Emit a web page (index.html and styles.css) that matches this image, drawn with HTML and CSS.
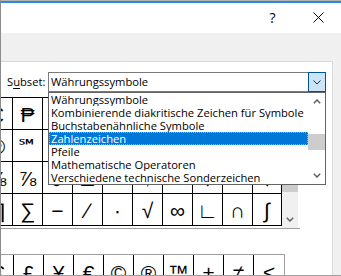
FILE: index.html
```html
<!DOCTYPE html>
<html lang="de">
<head>
<meta charset="utf-8">
<title>Symbol</title>
<link rel="stylesheet" href="styles.css">
</head>
<body>
<div class="window">
  <div class="accent"></div>
  <div class="titlebar">
    <div class="tb-btn help">?</div>
    <div class="tb-btn close"><svg width="11" height="11" viewBox="0 0 11 11"><path d="M0.5 0.5 L10.5 10.5 M10.5 0.5 L0.5 10.5" stroke="#000" stroke-width="1" fill="none"/></svg></div>
  </div>
  <div class="band"></div>
  <div class="panel">
    <div class="subset-row">
      <label class="subset-label">S<u>u</u>bset:</label>
      <div class="combo">
        <span class="combo-text">Währungssymbole</span>
        <span class="combo-btn"><svg width="8" height="5" viewBox="0 0 8 5"><path d="M0.5 0.5 L4 4 L7.5 0.5" stroke="#2b2b2b" stroke-width="1" fill="none"/></svg></span>
        <div class="dropdown">
          <ul class="list">
            <li>Währungssymbole</li>
            <li>Kombinierende diakritische Zeichen für Symbole</li>
            <li>Buchstabenähnliche Symbole</li>
            <li class="sel">Zahlenzeichen</li>
            <li>Pfeile</li>
            <li>Mathematische Operatoren</li>
            <li>Verschiedene technische Sonderzeichen</li>
          </ul>
          <div class="lscroll">
            <span class="l-arrow"><svg width="8" height="5" viewBox="0 0 8 5"><path d="M0.8 4.2 L4 1 L7.2 4.2" stroke="#606060" stroke-width="1.5" fill="none"/></svg></span>
            <span class="l-track"><span class="l-thumb"></span></span>
            <span class="l-arrow"><svg width="8" height="5" viewBox="0 0 8 5"><path d="M0.8 0.8 L4 4 L7.2 0.8" stroke="#606060" stroke-width="1.5" fill="none"/></svg></span>
          </div>
        </div>
      </div>
    </div>
    <div class="grid-wrap">
      <div class="grid">
        <span class="cell">€</span><span class="cell">₱</span><span class="cell">₲</span><span class="cell">₴</span><span class="cell">₵</span><span class="cell">₸</span><span class="cell">₹</span><span class="cell">₺</span><span class="cell">₼</span><span class="cell">₽</span>
        <span class="cell">℗</span><span class="cell">℠</span><span class="cell">™</span><span class="cell">Ω</span><span class="cell">℮</span><span class="cell">⅓</span><span class="cell">⅔</span><span class="cell">⅛</span><span class="cell">⅜</span><span class="cell">⅝</span>
        <span class="cell">⅝</span><span class="cell">⅞</span><span class="cell">∂</span><span class="cell">∆</span><span class="cell">←</span><span class="cell">↑</span><span class="cell">→</span><span class="cell">↓</span><span class="cell">↔</span><span class="cell">↕</span>
        <span class="cell">∏</span><span class="cell">∑</span><span class="cell">−</span><span class="cell">∕</span><span class="cell">∙</span><span class="cell">√</span><span class="cell">∞</span><span class="cell">∟</span><span class="cell">∩</span><span class="cell">∫</span>
      </div>
      <div class="gscroll">
        <div class="g-arrow"></div>
        <div class="g-track g-pre"></div>
        <div class="g-thumb"></div>
        <div class="g-track g-post"></div>
        <div class="g-arrow"><svg width="8" height="5" viewBox="0 0 8 5"><path d="M0.8 0.8 L4 4 L7.2 0.8" stroke="#606060" stroke-width="1.5" fill="none"/></svg></div>
      </div>
    </div>
    <div class="grid-base"></div>
    <div class="recent">
      <span class="rcell">€</span><span class="rcell">£</span><span class="rcell">¥</span><span class="rcell">€</span><span class="rcell">©</span><span class="rcell">®</span><span class="rcell">™</span><span class="rcell">±</span><span class="rcell">≠</span><span class="rcell last">≤</span>
    </div>
  </div>
</div>
</body>
</html>
```

FILE: styles.css
```css
* { box-sizing: border-box; }
html, body { margin: 0; padding: 0; }
body {
  width: 341px;
  height: 276px;
  overflow: hidden;
  background: #f0f0f0;
  font-family: "Open Sans", "Noto Sans", sans-serif;
  font-size: 11.2px;
  color: #000;
}
.window {
  width: 341px;
  height: 276px;
  border-left: 1px solid #8c8c8c;
  border-top: 1px solid #b4b4b4;
  border-bottom: 1px solid #a0a0a0;
  display: flex;
  flex-direction: column;
  background: #f0f0f0;
  overflow: hidden;
}
.accent { height: 2px; background: #2b8ad9; flex: none; }
.titlebar {
  height: 30px;
  flex: none;
  background: #fff;
  display: flex;
  justify-content: flex-end;
  align-items: stretch;
}
.tb-btn {
  display: flex;
  align-items: center;
  justify-content: center;
}
.help { width: 45px; font-size: 14px; line-height: 1; padding-bottom: 1px; }
.close { width: 46px; padding-bottom: 1px; }
.band { height: 28px; flex: none; }
.panel {
  flex: 1;
  width: 332px;
  background: #fff;
  border-top: 1px solid #d9d9d9;
  border-right: 1px solid #d9d9d9;
  overflow: hidden;
}
.subset-row {
  display: flex;
  align-items: center;
  padding: 10px 0 0 6px;
  position: relative;
  z-index: 5;
}
.subset-label { width: 41px; line-height: 18px; }
.subset-label u { text-decoration-thickness: 1px; text-underline-offset: 2px; }
.combo {
  position: relative;
  width: 278px;
  height: 20px;
  border: 1px solid #7a7a7a;
  background: #fff;
  display: flex;
}
.combo-text { flex: 1; padding-left: 2px; line-height: 18px; white-space: nowrap; }
.combo-btn {
  width: 18px;
  height: 20px;
  margin: -1px -1px -1px 0;
  background: #cce4f7;
  border: 1px solid #005499;
  display: flex;
  align-items: center;
  justify-content: center;
}
.dropdown {
  position: absolute;
  left: -1px;
  top: 19px;
  width: 278px;
  height: 93px;
  border: 1px solid #646464;
  background: #fff;
  display: flex;
}
.list { flex: 1; margin: 0; padding: 0; list-style: none; min-width: 0; }
.list li {
  height: 13px;
  line-height: 13px;
  padding-left: 2px;
  white-space: nowrap;
  overflow: hidden;
}
.list li.sel {
  background: #0078d7;
  color: #fff;
  outline: 1px dotted #f0a050;
  outline-offset: -1px;
}
.lscroll { width: 17px; display: flex; flex-direction: column; background: #fff; }
.l-arrow { height: 17px; display: flex; align-items: center; justify-content: center; flex: none; }
.l-track { flex: 1; display: block; }
.l-thumb { display: block; margin-top: 24px; height: 16px; background: #cdcdcd; }
.grid-wrap {
  display: flex;
  align-items: flex-start;
  margin: 5px 0 0 -19px;
}
.grid {
  display: grid;
  grid-template-columns: repeat(9, 30px) 29px;
  grid-auto-rows: 32px;
  border-top: 1px solid #000;
  border-left: 1px solid #000;
}
.cell {
  border-right: 1px solid #000;
  border-bottom: 1px solid #000;
  font-family: "Liberation Sans", "DejaVu Sans", sans-serif;
  font-size: 21px;
  line-height: 27px;
  padding-top: 3px;
  text-align: center;
  overflow: hidden;
}
.gscroll { width: 16px; display: flex; flex-direction: column; }
.g-arrow { height: 17px; background: #f0f0f0; display: flex; align-items: center; justify-content: center; }
.g-track { background: #f0f0f0; }
.g-pre { height: 36px; }
.g-thumb { height: 42px; background: #cdcdcd; }
.g-post { height: 19px; }
.grid-base { height: 1px; width: 300px; margin-left: -1px; background: #a0a0a0; }
.recent {
  display: flex;
  margin: 25px 0 0 -17px;
  border-top: 1px solid #a0a0a0;
  width: 301px;
  height: 40px;
}
.rcell {
  width: 30px;
  flex: none;
  border-right: 1px solid #000;
  font-family: "Liberation Sans", "DejaVu Sans", sans-serif;
  font-size: 21px;
  line-height: 27px;
  padding-top: 4px;
  text-align: center;
}
.rcell.last { width: 31px; border-right-color: #a0a0a0; }
```
